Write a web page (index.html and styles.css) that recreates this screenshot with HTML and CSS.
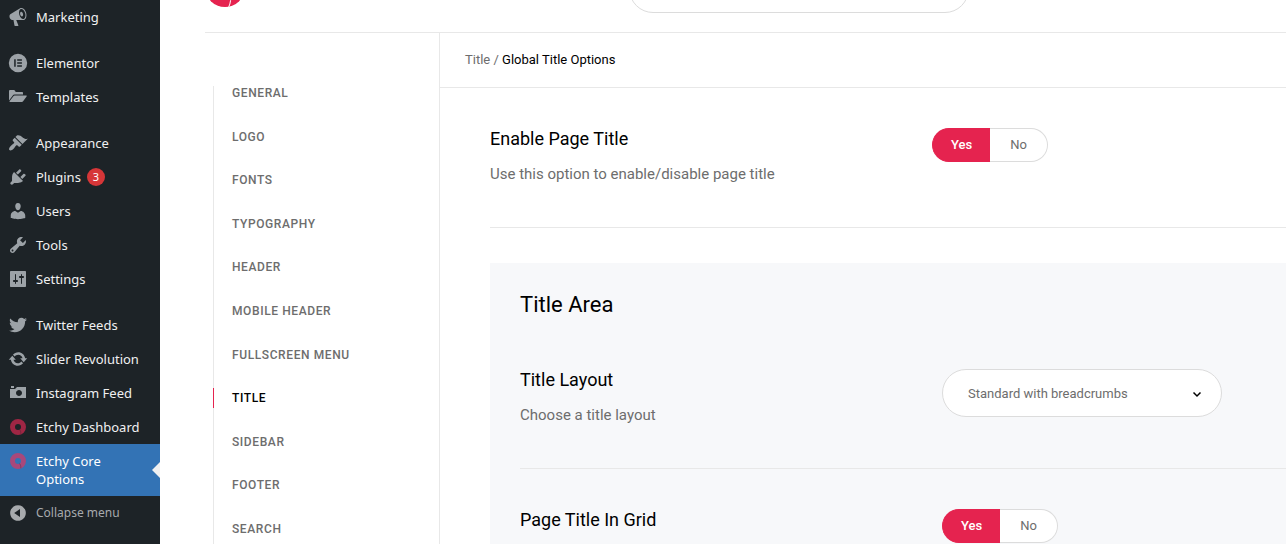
FILE: index.html
```html
<!DOCTYPE html>
<html lang="en">
<head>
    <meta charset="UTF-8">
    <meta name="viewport" content="width=device-width, initial-scale=1.0">
    <title>Etchy Core Options</title>
    <link rel="stylesheet" href="styles.css">
</head>
<body>
    <div class="wrap">
        <!-- admin menu -->
        <nav class="admin-menu" aria-label="Main menu">
            <ul>
                <li><a href="#"><svg viewBox="0 0 20 20"><path d="M18.15 5.94c.46 1.62.38 3.22-.02 4.48-.42 1.28-1.26 2.18-2.3 2.48-.16.06-.26.06-.4.06-.06.02-.12.02-.18.02-.06.02-.14.02-.22.02h-6.8l2.22 5.5c.02.14-.06.26-.14.34-.08.1-.24.16-.34.16H6.95c-.1 0-.26-.06-.34-.16-.08-.08-.16-.2-.14-.34l-1-5.5H4.25l-.02-.02c-.5.06-1.08-.18-1.54-.62s-.88-1.08-1.06-1.88c-.24-.8-.2-1.56-.02-2.2.18-.62.58-1.08 1.06-1.3l.02-.02 9-5.4c.1-.06.18-.1.24-.16.06-.04.14-.08.24-.12.16-.08.28-.12.5-.18 1.04-.3 2.24.1 3.22.98s1.84 2.24 2.26 3.86zm-2.58 5.98h-.02c.4-.1.74-.34 1.04-.7.58-.7.86-1.76.86-3.04 0-.64-.1-1.3-.28-1.98-.34-1.36-1.02-2.5-1.78-3.24s-1.68-1.1-2.46-.88c-.82.22-1.4.96-1.7 2-.32 1.04-.28 2.36.06 3.72.38 1.36 1 2.5 1.8 3.24.78.74 1.62 1.1 2.48.88zm-2.54-7.08c.22-.04.42-.02.62.04.38.16.76.48 1.02 1s.42 1.2.42 1.78c0 .3-.04.56-.12.8-.18.48-.44.84-.86.94-.34.1-.8-.06-1.14-.4s-.64-.86-.78-1.5c-.18-.62-.12-1.24.02-1.72s.48-.84.82-.94z"/></svg><span>Marketing</span></a></li>
                <li class="separator"></li>
                <li><a href="#"><svg viewBox="0 0 20 20"><path fill-rule="evenodd" d="M10 .8a9.2 9.2 0 1 1 0 18.4a9.2 9.2 0 1 1 0-18.4zM6.2 6.2v7.6h1.5V6.2zM9.2 6.2v1.5h4.7V6.2zM9.2 9.25v1.5h4.7v-1.5zM9.2 12.3v1.5h4.7v-1.5z"/></svg><span>Elementor</span></a></li>
                <li><a href="#"><svg viewBox="0 0 20 20"><path d="M1 4.2C1 3.5 1.5 3 2.2 3h3.6c.5 0 1 .3 1.2.7L7.7 5H14c.6 0 1 .4 1 1v1.5H6.5c-.7 0-1.3.3-1.7.9L1 13.5zM6.6 8.6h11.600c.5 0 .7.5.4.9l-3.700 5c-.2.3-.6.5-1 .5H1.900c-.4 0-.6-.4-.4-.8l4.100-5.100c.3-.3.6-.5 1-.5z"/></svg><span>Templates</span></a></li>
                <li class="separator"></li>
                <li><a href="#"><svg viewBox="0 0 20 20"><path d="M14.48 11.06L7.41 3.99l1.5-1.5c.5-.56 2.3-.47 3.51.32 1.21.8 1.43 1.28 2.91 2.1 1.18.64 2.45 1.26 4.45.85zm-.71.71L6.7 4.7 4.93 6.47c-.39.39-.39 1.02 0 1.41l1.06 1.06c.39.39.39 1.03 0 1.42-.6.6-1.43 1.11-2.21 1.69-.35.26-.7.53-1.01.84C1.43 14.23.4 16.08 1.4 17.07c.99 1 2.84-.03 4.18-1.36.31-.31.58-.66.85-1.02.57-.78 1.08-1.61 1.69-2.21.39-.39 1.02-.39 1.41 0l1.06 1.06c.39.39 1.02.39 1.41 0z"/></svg><span>Appearance</span></a></li>
                <li><a href="#"><svg viewBox="0 0 20 20"><path d="M13.11 4.36L9.87 7.6 8 5.73l3.24-3.24c.35-.34 1.05-.2 1.56.32.52.51.66 1.21.31 1.55zm-8 1.77l.91-1.12 9.01 9.01-1.19.84c-.71.71-2.63 1.16-3.82 1.16H6.14L4.9 17.26c-.59.59-1.54.59-2.12 0-.59-.58-.59-1.53 0-2.12l1.24-1.24v-3.88c0-1.13.4-3.19 1.09-3.89zm7.26 3.97l3.24-3.24c.34-.35 1.04-.21 1.55.31.52.51.66 1.21.31 1.55l-3.24 3.25z"/></svg><span>Plugins</span><b class="count">3</b></a></li>
                <li><a href="#"><svg viewBox="0 0 20 20"><path d="M10 9.25c-2.27 0-2.73-3.44-2.73-3.44C7 4.02 7.82 2 9.97 2c2.16 0 2.98 2.02 2.71 3.81 0 0-.41 3.44-2.68 3.44zm0 2.57L12.72 10c2.39 0 4.52 2.33 4.52 4.53v2.49s-3.65 1.13-7.24 1.13c-3.65 0-7.24-1.13-7.24-1.13v-2.49c0-2.25 1.94-4.48 4.47-4.48z"/></svg><span>Users</span></a></li>
                <li><a href="#"><svg viewBox="0 0 20 20"><path d="M16.68 9.77c-1.34 1.34-3.3 1.67-4.95.99l-5.41 6.52c-.99.99-2.59.99-3.58 0s-.99-2.59 0-3.57l6.52-5.42c-.68-1.65-.35-3.61.99-4.95 1.28-1.28 3.12-1.62 4.72-1.06l-2.89 2.89 2.82 2.82 2.86-2.87c.53 1.58.18 3.39-1.08 4.65zM3.81 16.21c.4.39 1.04.39 1.43 0 .4-.4.4-1.04 0-1.43-.39-.4-1.03-.4-1.43 0-.39.39-.39 1.03 0 1.43z"/></svg><span>Tools</span></a></li>
                <li><a href="#"><svg viewBox="0 0 20 20"><path d="M18 17V3c0-.6-.4-1-1-1H3c-.6 0-1 .4-1 1v14c0 .6.4 1 1 1h14c.6 0 1-.4 1-1zM8 11h1c.55 0 1 .45 1 1s-.45 1-1 1H8v1.5c0 .28-.22.5-.5.5s-.5-.22-.5-.5V13H6c-.55 0-1-.45-1-1s.45-1 1-1h1V5.5c0-.28.22-.5.5-.5s.5.22.5.5V11zm5-2h-1c-.55 0-1-.45-1-1s.45-1 1-1h1V5.5c0-.28.22-.5.5-.5s.5.22.5.5V7h1c.55 0 1 .45 1 1s-.45 1-1 1h-1v5.5c0 .28-.22.5-.5.5s-.5-.22-.5-.5V9z"/></svg><span>Settings</span></a></li>
                <li class="separator"></li>
                <li><a href="#"><svg viewBox="0 0 20 20"><path d="M18.94 4.46c-.49.73-1.11 1.38-1.83 1.9.01.15.01.31.01.47 0 4.85-3.69 10.44-10.43 10.44-2.07 0-4-.61-5.63-1.65.29.03.58.05.88.05 1.72 0 3.3-.59 4.55-1.57-1.6-.03-2.95-1.09-3.42-2.55.22.04.45.07.69.07.33 0 .66-.05.96-.13-1.67-.34-2.94-1.82-2.94-3.6v-.04c.5.27 1.06.44 1.66.46-.98-.66-1.63-1.78-1.63-3.06 0-.67.18-1.3.5-1.84 1.81 2.22 4.51 3.68 7.56 3.83-.06-.27-.1-.55-.1-.84 0-2.02 1.65-3.66 3.67-3.66 1.06 0 2.01.44 2.68 1.16.83-.17 1.62-.47 2.33-.89-.28.85-.86 1.57-1.62 2.02.75-.08 1.45-.28 2.11-.57z"/></svg><span>Twitter Feeds</span></a></li>
                <li><a href="#"><svg viewBox="0 0 20 20"><path d="M10.2 3.28c3.53 0 6.43 2.61 6.92 6h2.08l-3.5 4-3.5-4h2.32c-.45-1.97-2.21-3.45-4.32-3.45-1.45 0-2.73.71-3.54 1.78L4.95 5.66C6.23 4.2 8.11 3.28 10.2 3.28zm-.4 13.44c-3.52 0-6.43-2.61-6.92-6H.8l3.5-4c1.17 1.33 2.33 2.67 3.5 4H5.48c.45 1.97 2.21 3.45 4.32 3.45 1.45 0 2.73-.71 3.54-1.78l1.71 1.95c-1.28 1.46-3.15 2.38-5.25 2.38z"/></svg><span>Slider Revolution</span></a></li>
                <li><a href="#"><svg viewBox="0 0 20 20"><path d="M6 5V3H3v2h3zm12 10V4H9L7 6H2v9h16zm-7-8c1.66 0 3 1.34 3 3s-1.34 3-3 3-3-1.34-3-3 1.34-3 3-3z"/></svg><span>Instagram Feed</span></a></li>
                <li><a href="#"><svg class="etchy" viewBox="0 0 20 20"><path fill-rule="evenodd" d="M10 2a8 8 0 1 1 0 16a8 8 0 1 1 0-16zM10 7a3 3 0 1 0 0 6a3 3 0 1 0 0-6z"/><path class="cut" d="M11.5 12.5c1 1.2 1.5 2.5 1.3 4.8"/></svg><span>Etchy Dashboard</span></a></li>
                <li class="current"><a href="#"><svg class="etchy" viewBox="0 0 20 20"><path fill-rule="evenodd" d="M10 2a8 8 0 1 1 0 16a8 8 0 1 1 0-16zM10 7a3 3 0 1 0 0 6a3 3 0 1 0 0-6z"/><path class="cut" d="M11.5 12.5c1 1.2 1.5 2.5 1.3 4.8"/></svg><span>Etchy Core Options</span></a></li>
                <li><button type="button" class="collapse"><svg viewBox="0 0 20 20"><path fill-rule="evenodd" d="M10 2.16c4.33 0 7.84 3.51 7.84 7.84s-3.51 7.84-7.84 7.84S2.16 14.33 2.16 10 5.71 2.16 10 2.16zM12 13.88V6.12L6.18 10z"/></svg><span>Collapse menu</span></button></li>
            </ul>
        </nav>

        <main class="options-page">
            <header class="options-header">
                <a href="#" class="logo" aria-label="Etchy"><svg viewBox="0 0 40 40"><circle cx="20" cy="20" r="20"/><path d="M25 26c1.2 5 .8 10-1.5 14.5"/></svg></a>
                <input type="search" class="search" aria-label="Search options">
            </header>

            <div class="options-body">
                <nav class="options-nav" aria-label="Options">
                    <ul>
                        <li><a href="#">General</a></li>
                        <li><a href="#">Logo</a></li>
                        <li><a href="#">Fonts</a></li>
                        <li><a href="#">Typography</a></li>
                        <li><a href="#">Header</a></li>
                        <li><a href="#">Mobile Header</a></li>
                        <li><a href="#">Fullscreen Menu</a></li>
                        <li class="active"><a href="#">Title</a></li>
                        <li><a href="#">Sidebar</a></li>
                        <li><a href="#">Footer</a></li>
                        <li><a href="#">Search</a></li>
                    </ul>
                </nav>

                <div class="options-content">
                    <div class="breadcrumbs"><a href="#">Title</a> / <strong>Global Title Options</strong></div>

                    <form class="fields">
                        <div class="field">
                            <div class="field-desc">
                                <h3>Enable Page Title</h3>
                                <p>Use this option to enable/disable page title</p>
                            </div>
                            <div class="switch" role="radiogroup" aria-label="Enable Page Title">
                                <input type="radio" id="titleYes" name="pageTitle" checked>
                                <label for="titleYes">Yes</label>
                                <input type="radio" id="titleNo" name="pageTitle">
                                <label for="titleNo">No</label>
                            </div>
                        </div>

                        <section class="section">
                            <h2>Title Area</h2>
                            <div class="field">
                                <div class="field-desc">
                                    <h3><label for="titleLayout">Title Layout</label></h3>
                                    <p>Choose a title layout</p>
                                </div>
                                <div class="select">
                                    <select id="titleLayout">
                                        <option>Standard with breadcrumbs</option>
                                        <option>Standard</option>
                                    </select>
                                    <svg viewBox="0 0 10 7"><path d="M1.500 1.500l3.500 3.500 3.500-3.500"/></svg>
                                </div>
                            </div>
                            <div class="field">
                                <div class="field-desc">
                                    <h3>Page Title In Grid</h3>
                                </div>
                                <div class="switch" role="radiogroup" aria-label="Page Title In Grid">
                                    <input type="radio" id="gridYes" name="titleGrid" checked>
                                    <label for="gridYes">Yes</label>
                                    <input type="radio" id="gridNo" name="titleGrid">
                                    <label for="gridNo">No</label>
                                </div>
                            </div>
                        </section>
                    </form>
                </div>
            </div>
        </main>
    </div>
</body>
</html>
```
FILE: styles.css
```css
* {
    box-sizing: border-box;
}

body {
    margin: 0;
    background-color: #fff;
    font-family: Roboto, sans-serif;
    color: #6d6d6d;
}

ul {
    list-style: none;
    margin: 0;
    padding: 0;
}

a {
    color: inherit;
    text-decoration: none;
}

h2, h3, p {
    margin: 0;
}

.wrap {
    display: flex;
    height: 100vh;
    overflow: hidden;
}

/* admin menu */
.admin-menu {
    flex: none;
    width: 160px;
    background-color: #1d2327;
    font-family: "Noto Sans", "Open Sans", sans-serif;
    font-size: 13px;
    line-height: 18px;
    color: #f0f0f1;
}

.admin-menu a, .collapse {
    display: flex;
    align-items: flex-start;
    gap: 8px;
    padding: 8px 16px 8px 8px;
}

.admin-menu span {
    min-width: 0;
}

.admin-menu svg {
    flex: none;
    width: 20px;
    height: 20px;
    margin: -1px 0;
    fill: #9ca2a7;
}

.admin-menu .separator {
    height: 12px;
}

.admin-menu .count {
    width: 18px;
    height: 18px;
    margin-left: -2px;
    border-radius: 9px;
    background-color: #d63638;
    color: #fff;
    font-size: 11px;
    font-weight: 400;
    text-align: center;
}

.admin-menu .current {
    position: relative;
    background-color: #3373b5;
    color: #fff;
}

.admin-menu .current::after {
    content: "";
    position: absolute;
    right: 0;
    top: 50%;
    margin-top: -8px;
    border: 8px solid transparent;
    border-left-width: 0;
    border-right-color: #f0f0f1;
}

.admin-menu .etchy {
    fill: #9f2644;
}

.admin-menu .current .etchy {
    fill: #a8487b;
}

.etchy .cut {
    fill: none;
    stroke: #1d2327;
    stroke-opacity: 0.3;
}

.collapse {
    width: 100%;
    border: none;
    background: none;
    color: #a7aaad;
    font: inherit;
    font-size: 12px;
    line-height: 18px;
    text-align: left;
    cursor: pointer;
}

.collapse svg {
    fill: #a7aaad;
}

/* options page */
.options-page {
    flex: 1;
    min-width: 0;
    display: flex;
    flex-direction: column;
    padding-left: 45px;
}

.options-header {
    display: grid;
    grid-template: 100% / 424px 340px 1fr;
    align-items: end;
    flex: none;
    height: 33px;
    border-bottom: 1px solid #e8e8e8;
}

.logo {
    width: 40px;
    height: 40px;
    margin-bottom: 25px;
}

.logo svg {
    display: block;
    fill: #e5234f;
}

.logo path {
    fill: none;
    stroke: #fff;
}

.search {
    height: 48px;
    margin: 0 0 19px;
    padding: 0 25px;
    border: 1px solid #dcdcdc;
    border-radius: 24px;
    background-color: #fff;
}

.options-body {
    flex: 1;
    min-height: 0;
    display: flex;
}

.options-nav {
    flex: none;
    display: flex;
    width: 235px;
    padding: 53px 8px 0;
    border-right: 1px solid #e8e8e8;
}

.options-nav ul {
    flex: 1;
    display: flex;
    flex-direction: column;
    justify-content: space-between;
    padding: 0 0 8px 18px;
    border-left: 1px solid #e8e8e8;
}

.options-nav li {
    position: relative;
    font-size: 12px;
    font-weight: 500;
    line-height: 14px;
    letter-spacing: 0.05em;
    text-transform: uppercase;
}

.options-nav .active {
    color: #000;
}

.options-nav .active::before {
    content: "";
    position: absolute;
    left: -19px;
    top: -3px;
    width: 1px;
    height: 20px;
    background-color: #e5234f;
}

.options-content {
    flex: 1;
    min-width: 0;
}

.breadcrumbs {
    padding: 17px 25px;
    border-bottom: 1px solid #e8e8e8;
    font-size: 13px;
    line-height: 20px;
}

.breadcrumbs strong {
    color: #000;
    font-weight: 400;
}

.fields {
    padding-left: 50px;
}

.field {
    display: grid;
    grid-template-columns: 442px 1fr;
    align-items: start;
    padding: 40px 0;
    border-bottom: 1px solid #e8e8e8;
}

.field h3 {
    color: #000;
    font-size: 18px;
    font-weight: 400;
    line-height: 22px;
}

.field p {
    margin-top: 14px;
    font-size: 15px;
    line-height: 20px;
}

.fields > .field {
    padding-bottom: 43px;
}

.section {
    margin-top: 35px;
    padding: 26px 0 0 30px;
    background-color: #f7f8fa;
}

.section h2 {
    color: #000;
    font-size: 22px;
    font-weight: 400;
    line-height: 32px;
}

.section .field {
    grid-template-columns: 422px 1fr;
    padding-bottom: 43px;
}

.section h2 + .field {
    padding-top: 48px;
}

/* yes / no switch */
.switch {
    display: flex;
    width: 116px;
    height: 34px;
    font-size: 13px;
    line-height: 32px;
    text-align: center;
}

.switch input {
    position: absolute;
    opacity: 0;
}

.switch label {
    flex: 1;
    border: 1px solid #dcdcdc;
    background-color: #fff;
    cursor: pointer;
}

.switch label:first-of-type {
    border-right: none;
    border-radius: 17px 0 0 17px;
}

.switch label:last-of-type {
    border-left: none;
    border-radius: 0 17px 17px 0;
}

.switch input:checked + label {
    border-color: #e5234f;
    background-color: #e5234f;
    color: #fff;
    font-weight: 500;
}

.select {
    position: relative;
    width: 280px;
    height: 48px;
}

.select select {
    appearance: none;
    width: 100%;
    height: 100%;
    padding: 0 25px;
    border: 1px solid #dcdcdc;
    border-radius: 24px;
    background-color: #fff;
    color: #6d6d6d;
    font: inherit;
    font-size: 13px;
}

.select svg {
    position: absolute;
    right: 20px;
    top: 22px;
    width: 10px;
    height: 7px;
    fill: none;
    stroke: #000;
    stroke-width: 1.5;
    pointer-events: none;
}
```
